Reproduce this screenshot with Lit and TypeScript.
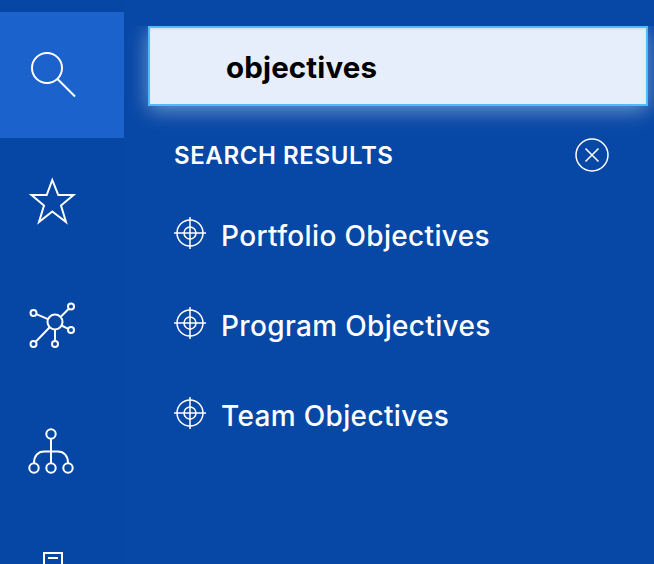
import { LitElement, css, html, svg } from 'lit';
import { customElement } from 'lit/decorators.js';

// each icon sits in a 56x56 box, centred in its rail item
const railIcons = [
  svg`<circle cx="19" cy="21" r="15"/><path d="M29.5 32 L47 49.5"/>`,
  svg`<path d="M24.300 7 L30.300 22 L45.500 22 L33 32.500 L38 49 L24.300 38.500 L11 49 L16 32.500 L3.500 22 L18.700 22 Z"/>`,
  svg`<circle cx="27" cy="24" r="7.5"/><circle cx="5.5" cy="15" r="3"/><circle cx="43" cy="8.5" r="3"/><circle cx="43" cy="32" r="3"/><circle cx="5.5" cy="46" r="3"/><circle cx="27" cy="46" r="3"/>
    <path d="M8.3 16.2 L20 21.2 M33 18.500 L40.800 10.800 M33.600 27.500 L40.200 30.800 M21.700 29.300 L7.700 43.800 M27 31.500 L27 43"/>`,
  svg`<circle cx="23" cy="11" r="4.700"/><circle cx="6" cy="45" r="4.700"/><circle cx="23" cy="45" r="4.700"/><circle cx="40" cy="45" r="4.700"/>
    <path d="M23 16 L23 40 M6 40 C6 33 10 28.500 16 28.500 L30 28.500 C36 28.500 40 33 40 40"/>`,
  svg`<path d="M16 5 H34 V53 H16 Z M20 10 H30"/>`,
];

const results = ['Portfolio Objectives', 'Program Objectives', 'Team Objectives'];

@customElement('app-root')
export class AppRoot extends LitElement {
  static styles = css`
    :host {
      display: flex;
      width: 654px;
      height: 564px;
      overflow: hidden;
      background: #0747a6;
      color: #fff;
      font-family: Inter, 'Liberation Sans', sans-serif;
    }

    .rail {
      flex: none;
      width: 124px;
      padding-top: 12px;
      background: #0646a4;
    }
    .rail-item {
      box-sizing: border-box;
      height: 125px;
      padding-right: 12px;
      display: flex;
      align-items: center;
      justify-content: center;
    }
    .rail-item.active {
      height: 126px;
      background: #1c62cc;
    }
    .rail-item svg {
      width: 56px;
      height: 56px;
      fill: none;
      stroke: #fff;
      stroke-width: 2;
    }

    .panel {
      flex: 1;
      min-width: 0;
      margin-top: 26px;
      padding-left: 24px;
      overflow: hidden;
    }

    .search {
      box-sizing: border-box;
      width: 500px;
      height: 80px;
      padding: 1px 0 0 76px;
      display: flex;
      align-items: center;
      border: 2px solid #4cbcff;
      background: #e6edfb;
      box-shadow: 0 4px 20px rgba(255, 255, 255, 0.45), inset 0 2px 2px rgba(9, 30, 66, 0.06);
      color: #000;
      font-size: 29.5px;
      font-weight: 700;
      letter-spacing: 0.15px;
    }

    .header {
      width: 435px;
      margin: 33px 0 0 26px;
      height: 32px;
      display: flex;
      align-items: center;
      justify-content: space-between;
      font-size: 24px;
      font-weight: 600;
      letter-spacing: 0.6px;
    }
    .header svg {
      width: 34px;
      height: 34px;
      fill: none;
      stroke: #fff;
      stroke-width: 1.500;
    }

    .results {
      list-style: none;
      margin: 19px 0 0 26px;
      padding: 0;
    }
    .results li {
      height: 90px;
      display: flex;
      align-items: center;
      gap: 15px;
      font-size: 28px;
      font-weight: 500;
      letter-spacing: 0.34px;
    }
    .results span {
      padding-top: 2px;
    }
    .results svg {
      flex: none;
      width: 32px;
      height: 32px;
      margin-bottom: 5px;
      fill: none;
      stroke: #fff;
      stroke-width: 1.500;
    }
  `;

  protected render() {
    return html`
      <nav class="rail">
        ${railIcons.map(
          (icon, i) => html`
            <div class="rail-item ${i === 0 ? 'active' : ''}">
              <svg viewBox="0 0 56 56">${icon}</svg>
            </div>
          `
        )}
      </nav>
      <section class="panel">
        <div class="search">objectives</div>
        <div class="header">
          <span>SEARCH RESULTS</span>
          <svg viewBox="0 0 34 34">
            <circle cx="17" cy="17" r="16"/>
            <path d="M10.500 10.500 L23.500 23.500 M23.500 10.500 L10.500 23.500"/>
          </svg>
        </div>
        <ul class="results">
          ${results.map(
            (name) => html`
              <li>
                <svg viewBox="0 0 32 32">
                  <circle cx="16" cy="16" r="13"/>
                  <circle cx="16" cy="16" r="6"/>
                  <path d="M16 0 V32 M0 16 H32"/>
                </svg>
                <span>${name}</span>
              </li>
            `
          )}
        </ul>
      </section>
    `;
  }
}
